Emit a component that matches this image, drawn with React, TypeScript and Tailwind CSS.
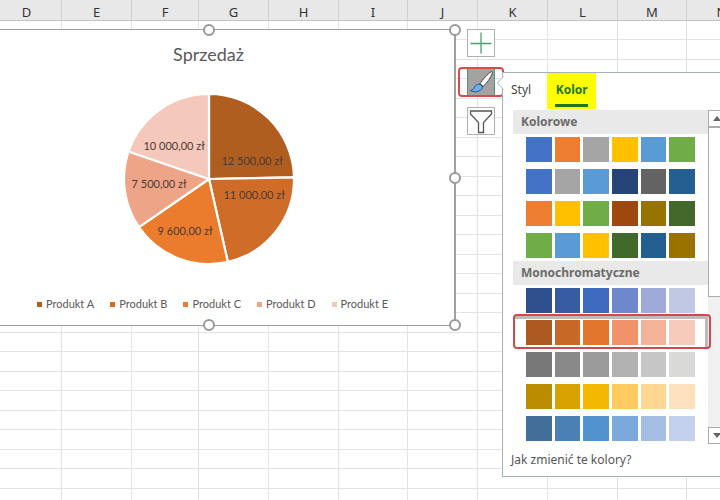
import { useState } from 'react'
import clsx from 'clsx'

const COLUMNS = [
  { name: 'D', width: 'w-[70px]' },
  { name: 'E', width: 'w-[70px]' },
  { name: 'F', width: 'w-[67px]' },
  { name: 'G', width: 'w-[70px]' },
  { name: 'H', width: 'w-[70px]' },
  { name: 'I', width: 'w-[69px]' },
  { name: 'J', width: 'w-[70px]' },
  { name: 'K', width: 'w-[70px]' },
  { name: 'L', width: 'w-[70px]' },
  { name: 'M', width: 'w-[69px]' },
  { name: 'N', width: 'w-[70px]' },
]

const ROW_COUNT = 25

const PRODUCTS = [
  { name: 'Produkt A', value: 12500, label: '12 500,00 zł', color: '#b05d20', x: 128, y: 71 },
  { name: 'Produkt B', value: 11000, label: '11 000,00 zł', color: '#cf6c27', x: 130, y: 105 },
  { name: 'Produkt C', value: 9600, label: '9 600,00 zł', color: '#eb7b2d', x: 61, y: 141 },
  { name: 'Produkt D', value: 7500, label: '7 500,00 zł', color: '#eea587', x: 35, y: 94 },
  { name: 'Produkt E', value: 10000, label: '10 000,00 zł', color: '#f4c8ba', x: 50, y: 56 },
]

const COLORFUL = [
  ['#4472c4', '#ed7d31', '#a5a5a5', '#ffc000', '#5b9bd5', '#70ad47'],
  ['#4472c4', '#a5a5a5', '#5b9bd5', '#264478', '#636363', '#255e91'],
  ['#ed7d31', '#ffc000', '#70ad47', '#9e480e', '#997300', '#43682b'],
  ['#70ad47', '#5b9bd5', '#ffc000', '#43682b', '#255e91', '#997300'],
]

const MONOCHROME = [
  ['#2f508c', '#375ca4', '#3e6bc0', '#6f87cb', '#9faad9', '#c0c8e4'],
  ['#ad5a22', '#c86827', '#e1762c', '#f1936a', '#f4b299', '#f7cbbc'],
  ['#787878', '#898989', '#9b9b9b', '#b1b1b1', '#c6c6c6', '#d9d9d8'],
  ['#ba8c00', '#d7a200', '#f4b800', '#ffca60', '#ffd792', '#fee2bd'],
  ['#416f9a', '#4a81b4', '#5292cd', '#7ca9dc', '#a4bee3', '#c3d1ec'],
]

function Sheet() {
  return (
    <table className="-ml-2 w-[765px] table-fixed border-separate border-spacing-0">
      <thead>
        <tr className="h-[21px] bg-[#e8e8e8]">
          {COLUMNS.map((col) => (
            <th
              key={col.name}
              scope="col"
              className={clsx(
                col.width,
                'border-r border-b border-r-[#cfcfcf] border-b-[#c3c3c3] p-0 pt-1 text-[13px] leading-4 font-normal text-[#333]',
              )}
            >
              {col.name}
            </th>
          ))}
        </tr>
      </thead>
      <tbody>
        {Array.from({ length: ROW_COUNT }, (_, i) => (
          <tr key={i} className={i % 2 === 0 ? 'h-[19px]' : 'h-[20px]'}>
            {COLUMNS.map((col) => (
              <td key={col.name} className="border-r border-b border-[#e3e3e3] p-0" />
            ))}
          </tr>
        ))}
      </tbody>
    </table>
  )
}

function PieChart() {
  const total = PRODUCTS.reduce((sum, p) => sum + p.value, 0)
  const point = (part: number) => {
    const angle = (part / total) * 2 * Math.PI
    return `${(85 + 85 * Math.sin(angle)).toFixed(2)} ${(85 - 85 * Math.cos(angle)).toFixed(2)}`
  }
  let sum = 0
  const slices = PRODUCTS.map((p) => {
    const start = sum
    sum += p.value
    return { ...p, d: `M85 85L${point(start)}A85 85 0 0 1 ${point(sum)}Z` }
  })

  return (
    <svg width="170" height="170" viewBox="0 0 170 170" role="img" aria-label="Sprzedaż">
      {slices.map((s) => (
        <path key={s.name} d={s.d} fill={s.color} stroke="#fff" strokeWidth="2.2" strokeLinejoin="round" />
      ))}
      {slices.map((s) => (
        <text key={s.name} x={s.x} y={s.y} textAnchor="middle" className="fill-[#4b3a33] text-[11px]">
          {s.label}
        </text>
      ))}
    </svg>
  )
}

function Handle({ className }: { className: string }) {
  return (
    <span
      className={clsx('absolute size-3 rounded-full border-2 border-[#999] bg-white', className)}
    />
  )
}

function Chart() {
  return (
    <section className="absolute top-[29px] -left-[38px] flex h-[297px] w-[494px] flex-col items-center border border-r-2 border-[#a0a0a0] bg-white font-['Lato',sans-serif] text-[#595959]">
      <h2 className="mt-3 text-[18px] leading-6">Sprzedaż</h2>
      <div className="mt-7">
        <PieChart />
      </div>
      <ul className="mt-8 flex gap-4 pl-2 text-[11px] leading-4">
        {PRODUCTS.map((p) => (
          <li key={p.name} className="flex items-center gap-1">
            <span className="size-[5px]" style={{ backgroundColor: p.color }} />
            {p.name}
          </li>
        ))}
      </ul>
      <Handle className="-top-[6px] left-[240px]" />
      <Handle className="-top-[6px] -right-[7px]" />
      <Handle className="top-[142px] -right-[7px]" />
      <Handle className="-bottom-[6px] left-[240px]" />
      <Handle className="-right-[7px] -bottom-[6px]" />
    </section>
  )
}

function ChartTools() {
  return (
    <div className="absolute top-[29px] left-[467px] flex flex-col gap-[11px]">
      <button aria-label="Elementy wykresu" className="size-7 border border-[#b0b0b0] bg-white">
        <svg viewBox="0 0 26 26" className="size-full" fill="none" stroke="#4ea072">
          <path d="M13 2.5v21M2.5 13.5h21" strokeWidth="1.3" />
        </svg>
      </button>
      <button aria-label="Style wykresu" className="relative size-7 border-x border-[#4b9a72] bg-[#a3a3a3]">
        <svg viewBox="0 0 26 28" className="size-full" fill="none" strokeLinejoin="round">
          <path d="M23.7 3.6c-3.8 1.5-9.5 8.6-11.7 12.2l3 2.7c3.8-3.2 8-9 9.2-13.1.3-1.1.3-2.1-.5-1.8Z" fill="#fff" stroke="#444" />
          <path d="M11.3 16.3c-2.1-.2-3.9.8-4.6 2.6-.7 1.9-1.8 3-4.2 3.7 2.8 1.7 7.2 1.5 9.8-.2 1.7-1.1 2.2-2.8 1.9-4.3-.2-.8-1.6-1.8-2.9-1.8Z" fill="#61b4f4" stroke="#25598a" />
          <path d="m11.6 15.7 3.3 3" stroke="#333" />
        </svg>
        <span className="absolute -inset-x-[10px] -inset-y-px rounded border-2 border-[#d94b48]" />
      </button>
      <button aria-label="Filtry wykresu" className="size-7 border border-[#b0b0b0] bg-white">
        <svg viewBox="0 0 26 26" className="size-full" fill="none" stroke="#555" strokeWidth="1.3">
          <path d="M2.5 3h21v3L15.5 14.5v10h-5v-10L2.5 6Z" />
        </svg>
      </button>
    </div>
  )
}

type PaletteProps = {
  title: string
  rows: string[][]
  selected?: number
}

function Palette({ title, rows, selected }: PaletteProps) {
  return (
    <section>
      <h3 className="h-6 bg-[#e9e9e9] pl-2 text-[12px] leading-6 font-bold text-[#6b6b6b]">{title}</h3>
      <div className="flex flex-col gap-[7px] pt-[3px] pb-[3px] pl-[13px]">
        {rows.map((colors, i) => (
          <button
            key={i}
            aria-label={`${title} ${i + 1}`}
            className="relative grid h-[25px] w-[169px] grid-cols-6 gap-[3px]"
          >
            {colors.map((color) => (
              <span key={color} className="relative z-10 h-full" style={{ backgroundColor: color }} />
            ))}
            {i === selected && (
              <>
                <span className="absolute -top-[4px] -right-[13px] -bottom-[2px] -left-[12px] border-t-[3px] border-r-[3px] border-[#bcbcbc]" />
                <span className="absolute -top-[6px] -right-[16px] -bottom-[4px] -left-[13px] z-20 rounded border-2 border-[#d2484c]" />
              </>
            )}
          </button>
        ))}
      </div>
    </section>
  )
}

function Scrollbar() {
  return (
    <div className="flex w-[17px] flex-col bg-[#f0f0f0]">
      <button aria-label="W górę" className="flex h-[17px] items-center justify-center border border-[#ababab] bg-white">
        <svg width="8" height="5" viewBox="0 0 8 5" fill="#666">
          <path d="M4 0 8 5H0Z" />
        </svg>
      </button>
      <div className="h-[170px] border border-[#ababab] bg-white" />
      <div className="flex-1" />
      <button aria-label="W dół" className="flex h-[17px] items-center justify-center border border-[#ababab] bg-white">
        <svg width="8" height="5" viewBox="0 0 8 5" fill="#666">
          <path d="M0 0h8L4 5Z" />
        </svg>
      </button>
    </div>
  )
}

function StylePanel() {
  const [tab, setTab] = useState('Kolor')

  return (
    <aside className="absolute top-[72px] left-[502px] w-[234px] border border-[#a5b5b5] bg-white">
      <svg width="7" height="14" viewBox="0 0 7 14" className="absolute top-[3px] -left-[6px]" fill="#fff" stroke="#a5b5b5">
        <path d="M6.5 .5 .5 7l6 6.5" />
      </svg>
      <div role="tablist" className="flex h-9 text-[12px]">
        {['Styl', 'Kolor'].map((name) => (
          <button
            key={name}
            role="tab"
            aria-selected={tab === name}
            onClick={() => setTab(name)}
            className={clsx(
              'flex flex-col items-center px-2',
              tab === name ? 'bg-[#ffff00] font-bold text-[#217a1c]' : 'mr-2 text-[#444]',
            )}
          >
            <span className="pt-[7px] leading-5">{name}</span>
            {tab === name && <span className="mt-1 h-[3px] w-[33px] bg-[#21741c]" />}
          </button>
        ))}
      </div>
      <div className="mt-px ml-[10px] flex">
        <div className="w-[195px]">
          <Palette title="Kolorowe" rows={COLORFUL} />
          <Palette title="Monochromatyczne" rows={MONOCHROME} selected={1} />
        </div>
        <Scrollbar />
      </div>
      <a href="#" className="block px-2 pt-[6px] pb-[6px] text-[12px] leading-5 text-[#555]">
        Jak zmienić te kolory?
      </a>
    </aside>
  )
}

export default function App() {
  return (
    <main className="relative h-screen overflow-hidden bg-white font-['Noto_Sans',sans-serif]">
      <Sheet />
      <Chart />
      <ChartTools />
      <StylePanel />
    </main>
  )
}
